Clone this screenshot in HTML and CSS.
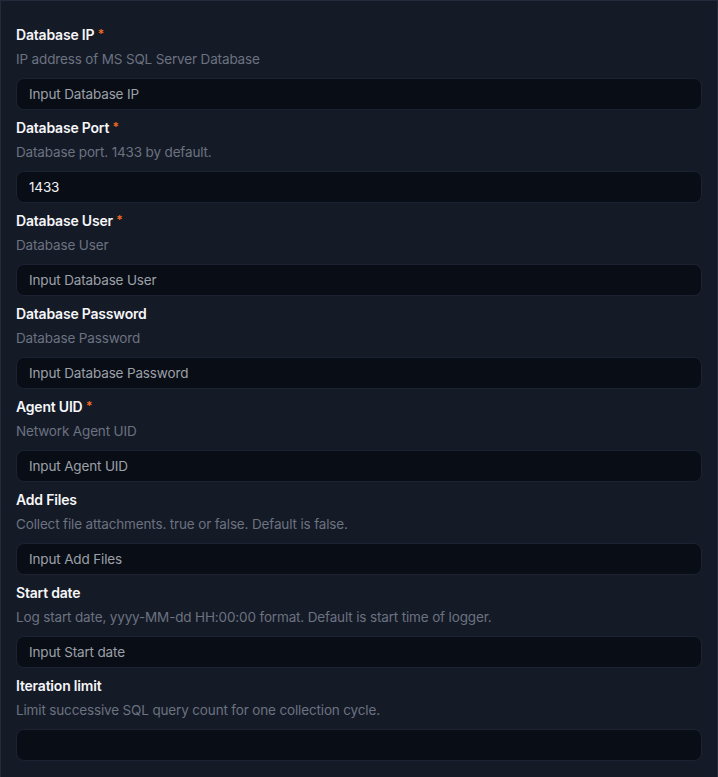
FILE: index.html
```html
<!DOCTYPE html>
<html lang="en">
<head>
    <meta charset="UTF-8">
    <meta name="viewport" content="width=device-width, initial-scale=1.0">
    <title>MS SQL Server Logger</title>
    <link rel="stylesheet" href="styles.css">
</head>
<body>
    <div class="container">
        <div class="field">
            <label for="db-ip">Database IP <span class="required">*</span></label>
            <div class="hint">IP address of MS SQL Server Database</div>
            <input type="text" id="db-ip" placeholder="Input Database IP">
        </div>
        <div class="field">
            <label for="db-port">Database Port <span class="required">*</span></label>
            <div class="hint">Database port. 1433 by default.</div>
            <input type="text" id="db-port" value="1433" placeholder="Input Database Port">
        </div>
        <div class="field">
            <label for="db-user">Database User <span class="required">*</span></label>
            <div class="hint">Database User</div>
            <input type="text" id="db-user" placeholder="Input Database User">
        </div>
        <div class="field">
            <label for="db-password">Database Password</label>
            <div class="hint">Database Password</div>
            <input type="text" id="db-password" placeholder="Input Database Password">
        </div>
        <div class="field">
            <label for="agent-uid">Agent UID <span class="required">*</span></label>
            <div class="hint">Network Agent UID</div>
            <input type="text" id="agent-uid" placeholder="Input Agent UID">
        </div>
        <div class="field">
            <label for="add-files">Add Files</label>
            <div class="hint">Collect file attachments. true or false. Default is false.</div>
            <input type="text" id="add-files" placeholder="Input Add Files">
        </div>
        <div class="field">
            <label for="start-date">Start date</label>
            <div class="hint">Log start date, yyyy-MM-dd HH:00:00 format. Default is start time of logger.</div>
            <input type="text" id="start-date" placeholder="Input Start date">
        </div>
        <div class="field">
            <label for="iteration-limit">Iteration limit</label>
            <div class="hint">Limit successive SQL query count for one collection cycle.</div>
            <input type="text" id="iteration-limit">
        </div>
    </div>
</body>
</html>
```

FILE: styles.css
```css
html, body {
    margin: 0;
    padding: 0;
    background-color: #151a27;
}
body {
    font-family: 'Inter', 'Noto Sans', sans-serif;
    font-size: 13.5px;
    line-height: 20px;
    letter-spacing: -0.15px;
    color: #f3f4f6;
}
.container {
    min-height: 777px;
    box-sizing: border-box;
    border: 1px solid #232a3b;
    border-bottom: none;
    background-color: #151a27;
    padding: 24px 15px 0 15px;
}
.field {
    margin-bottom: 8px;
}
label {
    display: block;
    font-size: 14px;
    font-weight: 600;
    letter-spacing: -0.2px;
    color: #f5f6f8;
}
.required {
    position: relative;
    top: -2px;
    line-height: 0;
    color: #f26b21;
    font-size: 12px;
}
.hint {
    margin-top: 4px;
    color: #6b7280;
}
input[type="text"] {
    display: block;
    width: 100%;
    height: 32px;
    margin-top: 9px;
    padding: 0 12px;
    box-sizing: border-box;
    background-color: #090d16;
    border: 1px solid #1c2233;
    border-radius: 8px;
    color: #f3f4f6;
    font-family: inherit;
    font-size: 13.5px;
    letter-spacing: -0.15px;
    outline: none;
}
input::placeholder {
    color: #9ca0a8;
    opacity: 1;
}
```
